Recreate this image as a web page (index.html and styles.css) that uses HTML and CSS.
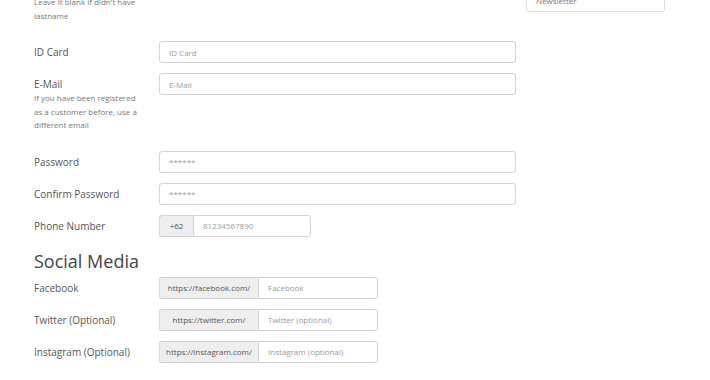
FILE: index.html
```html
<!DOCTYPE html>
<html lang="en">
  <head>
    <meta charset="UTF-8" />
    <meta name="viewport" content="width=device-width, initial-scale=1.0" />
    <title>Register - Member Area</title>
    <link rel="stylesheet" href="styles.css">
  </head>
  <body>
    <div class="page">
      <form class="register-form" onsubmit="return false">
        <div class="form-row">
          <div class="label-col">
            <label for="lastname">Last Name (Optional)</label>
            <p class="help">Leave it blank if didn't have lastname</p>
          </div>
          <div class="field-col">
            <input type="text" id="lastname" placeholder="Last Name" />
          </div>
        </div>
        <div class="form-row">
          <div class="label-col"><label for="idcard">ID Card</label></div>
          <div class="field-col">
            <input type="text" id="idcard" placeholder="ID Card" />
          </div>
        </div>
        <div class="form-row">
          <div class="label-col">
            <label for="email">E-Mail</label>
            <p class="help">
              If you have been registered as a customer before, use a
              different email
            </p>
          </div>
          <div class="field-col">
            <input type="email" id="email" placeholder="E-Mail" />
          </div>
        </div>
        <div class="form-row">
          <div class="label-col"><label for="password">Password</label></div>
          <div class="field-col">
            <input type="password" id="password" placeholder="******" />
          </div>
        </div>
        <div class="form-row">
          <div class="label-col">
            <label for="password2">Confirm Password</label>
          </div>
          <div class="field-col">
            <input type="password" id="password2" placeholder="******" />
          </div>
        </div>
        <div class="form-row">
          <div class="label-col"><label for="phone">Phone Number</label></div>
          <div class="field-col">
            <div class="input-group phone">
              <span class="addon">+62</span>
              <input type="text" id="phone" placeholder="81234567890" />
            </div>
          </div>
        </div>

        <h2>Social Media</h2>
        <div class="form-row">
          <div class="label-col"><label for="facebook">Facebook</label></div>
          <div class="field-col">
            <div class="input-group">
              <span class="addon">https://facebook.com/</span>
              <input type="text" id="facebook" placeholder="Facebook" />
            </div>
          </div>
        </div>
        <div class="form-row">
          <div class="label-col">
            <label for="twitter">Twitter (Optional)</label>
          </div>
          <div class="field-col">
            <div class="input-group">
              <span class="addon">https://twitter.com/</span>
              <input type="text" id="twitter" placeholder="Twitter (optional)" />
            </div>
          </div>
        </div>
        <div class="form-row">
          <div class="label-col">
            <label for="instagram">Instagram (Optional)</label>
          </div>
          <div class="field-col">
            <div class="input-group">
              <span class="addon">https://instagram.com/</span>
              <input type="text" id="instagram" placeholder="Instagram (optional)" />
            </div>
          </div>
        </div>
      </form>

      <aside class="sidebar">
        <ul class="list-group">
          <li>Account</li>
          <li>Newsletter</li>
        </ul>
      </aside>
    </div>
  </body>
</html>
```

FILE: styles.css
```css
* {
  box-sizing: border-box;
  margin: 0;
  padding: 0;
}
body {
  font-family: "Open Sans", "Liberation Sans", sans-serif;
  background: #fff;
  color: #555;
  overflow: hidden;
}
.page {
  display: flex;
  align-items: flex-start;
  padding-left: 34px;
  margin-top: -23px;
}
.register-form {
  width: 482px;
}
.form-row {
  display: flex;
  margin-bottom: 10px;
}
.label-col {
  width: 125px;
  flex-shrink: 0;
}
.label-col label {
  display: block;
  padding-top: 5px;
  font-size: 10px;
  line-height: 13px;
  color: #555;
}
.help {
  font-size: 8px;
  line-height: 13.5px;
  color: #777;
  margin-bottom: 9px;
  padding-right: 16px;
}
.field-col {
  flex: 1;
}
input {
  display: block;
  width: 100%;
  height: 22px;
  padding: 0 9px;
  border: 1px solid #d3d3d3;
  border-radius: 3px;
  font-family: inherit;
  font-size: 8px;
  color: #555;
  background: #fff;
}
input::placeholder {
  color: #9a9a9a;
}
.input-group {
  display: flex;
  height: 22px;
}
.addon {
  display: flex;
  align-items: center;
  justify-content: center;
  min-width: 99px;
  padding: 0 6px;
  background: #eee;
  border: 1px solid #d3d3d3;
  border-right: none;
  border-radius: 3px 0 0 3px;
  font-size: 8px;
  color: #555;
  white-space: nowrap;
}
.input-group input {
  width: 120px;
  border-radius: 0 3px 3px 0;
}
.input-group.phone .addon {
  min-width: 34px;
  width: 34px;
}
.input-group.phone input {
  width: 118px;
}
h2 {
  font-size: 18px;
  font-weight: 400;
  line-height: 22px;
  color: #444;
  margin-top: 13px;
  margin-bottom: 5px;
}
.sidebar {
  width: 139px;
  margin-left: 10px;
  margin-top: -13px;
}
.list-group {
  list-style: none;
  border: 1px solid #ddd;
  border-radius: 3px;
}
.list-group li {
  padding: 5px 9px;
  font-size: 8px;
  line-height: 13px;
  height: 23px;
  color: #777;
}
.list-group li + li {
  border-top: 1px solid #ddd;
}
```
